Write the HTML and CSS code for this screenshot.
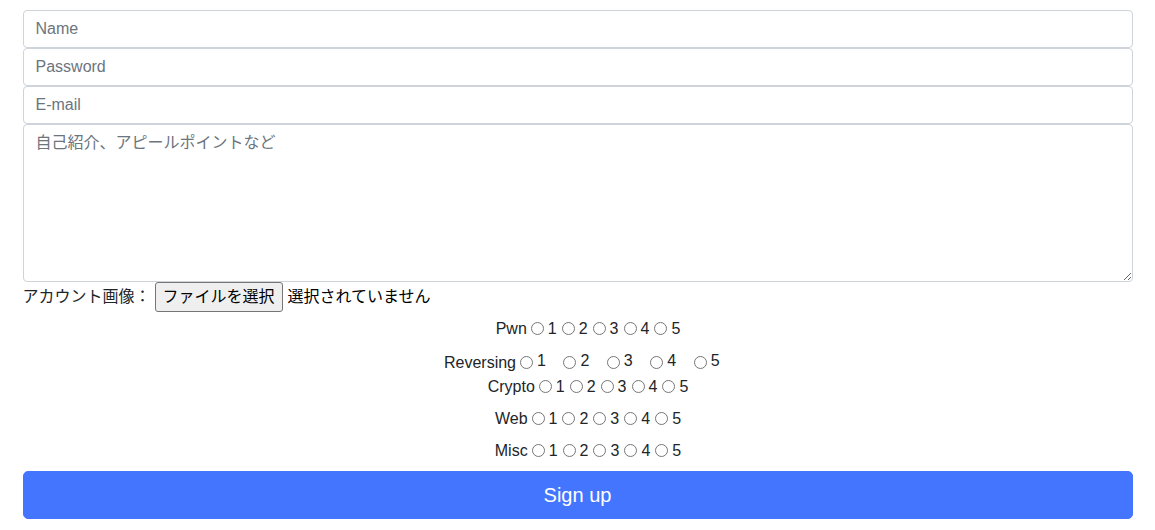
FILE: index.html
```html
<!DOCTYPE html>
<html lang="ja">
<head>
<meta charset="utf-8">
<title>Sign up</title>
<link rel="stylesheet" href="styles.css">
</head>
<body>
<form class="form">
  <input class="control" type="text" placeholder="Name">
  <input class="control" type="password" placeholder="Password">
  <input class="control" type="email" placeholder="E-mail">
  <textarea class="control area" placeholder="自己紹介、アピールポイントなど"></textarea>
  <div class="file-row">
    <span class="file-label">アカウント画像：</span>
    <span class="file-btn">ファイルを選択</span>
    <span class="file-status">選択されていません</span>
  </div>
  <div class="skills">
    <div class="skill first">Pwn<label class="opt"><input type="radio" name="pwn">1</label><label class="opt"><input type="radio" name="pwn">2</label><label class="opt"><input type="radio" name="pwn">3</label><label class="opt"><input type="radio" name="pwn">4</label><label class="opt"><input type="radio" name="pwn">5</label></div>
    <div class="skill wide">Reversing<label class="opt"><input type="radio" name="rev"><span class="num">1</span></label><label class="opt"><input type="radio" name="rev"><span class="num">2</span></label><label class="opt"><input type="radio" name="rev"><span class="num">3</span></label><label class="opt"><input type="radio" name="rev"><span class="num">4</span></label><label class="opt"><input type="radio" name="rev"><span class="num">5</span></label></div>
    <div class="skill">Crypto<label class="opt"><input type="radio" name="cry">1</label><label class="opt"><input type="radio" name="cry">2</label><label class="opt"><input type="radio" name="cry">3</label><label class="opt"><input type="radio" name="cry">4</label><label class="opt"><input type="radio" name="cry">5</label></div>
    <div class="skill">Web<label class="opt"><input type="radio" name="web">1</label><label class="opt"><input type="radio" name="web">2</label><label class="opt"><input type="radio" name="web">3</label><label class="opt"><input type="radio" name="web">4</label><label class="opt"><input type="radio" name="web">5</label></div>
    <div class="skill last">Misc<label class="opt"><input type="radio" name="misc">1</label><label class="opt"><input type="radio" name="misc">2</label><label class="opt"><input type="radio" name="misc">3</label><label class="opt"><input type="radio" name="misc">4</label><label class="opt"><input type="radio" name="misc">5</label></div>
  </div>
  <button class="submit" type="button">Sign up</button>
</form>
</body>
</html>
```
FILE: styles.css
```css
* { box-sizing: border-box; }
html, body { margin: 0; padding: 0; background: #fff; }
body {
  font-family: "Liberation Sans", "Noto Sans CJK JP", sans-serif;
  font-size: 16px;
  line-height: 24px;
  color: #212529;
}
.form {
  width: 1110px;
  margin: 10px auto 0;
  display: flex;
  flex-direction: column;
}
.control {
  display: block;
  width: 100%;
  height: 38px;
  margin: 0;
  padding: 6px 12px;
  font-family: inherit;
  font-size: 16px;
  line-height: 24px;
  color: #495057;
  background: #fff;
  border: 1px solid #ced4da;
  border-radius: 4px;
  outline: none;
}
.control::placeholder { color: #6c757d; opacity: 1; }
.area { height: 158px; resize: vertical; }
.file-row {
  display: flex;
  align-items: center;
  height: 30px;
}
.file-label { margin-right: 4px; }
.file-btn {
  display: flex;
  align-items: center;
  height: 30px;
  padding: 0 7px;
  background: #efefef;
  border: 1px solid #767676;
  border-radius: 3px;
  color: #000;
  margin-right: 5px;
}
.file-status { color: #000; }
.skills {
  display: flex;
  flex-direction: column;
  padding-top: 5px;
}
.skill {
  text-align: center;
  padding-left: 22px;
  height: 24px;
  margin-bottom: 8px;
  white-space: nowrap;
}
.skill.first { margin-bottom: 9px; }
.skill.last { margin-bottom: 7px; }
.skill.wide { height: 25px; margin-bottom: 0; padding-top: 1px; }
.opt { margin-right: 1px; }
.opt input {
  width: 13px;
  height: 13px;
  margin: 0 4px 0 4px;
  vertical-align: -1px;
}
.wide .opt { margin-right: 13.5px; }
.wide .num { position: relative; top: -2px; }
.submit {
  margin-top: 1px;
  height: 48px;
  width: 100%;
  border: 1px solid #4375ff;
  background: #4375ff;
  color: #fff;
  font-family: "Liberation Sans", sans-serif;
  font-size: 20px;
  border-radius: 5px;
}
```
